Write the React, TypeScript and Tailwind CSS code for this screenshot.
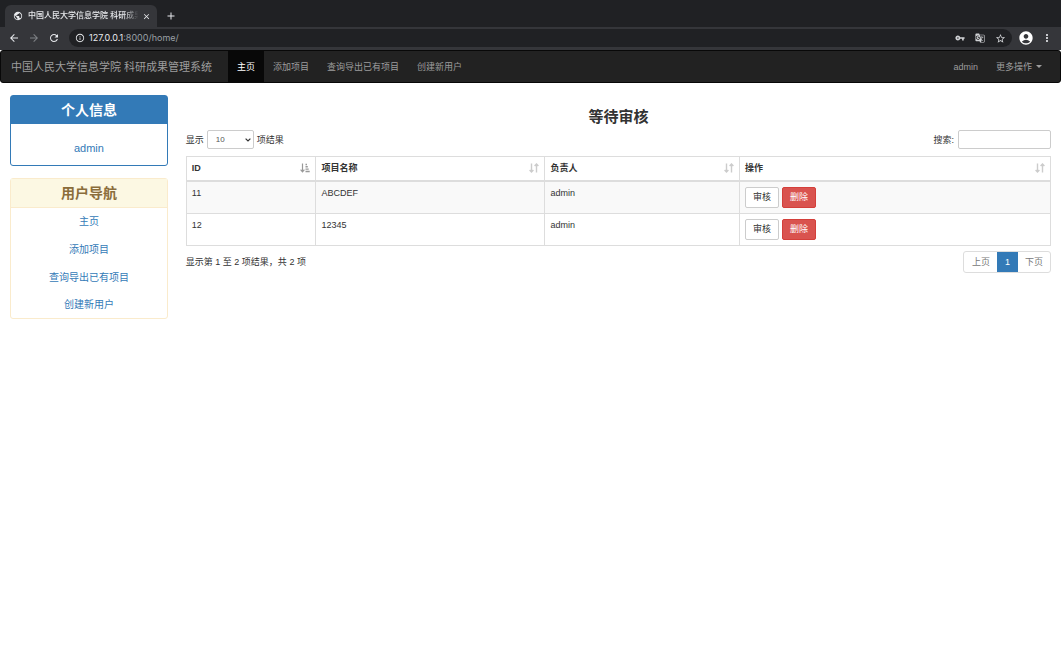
import { useState } from "react";
import { MdPublic, MdArrowBack, MdArrowForward, MdRefresh, MdInfoOutline, MdVpnKey, MdGTranslate, MdStarBorder, MdAccountCircle, MdMoreVert, MdClose, MdAdd } from "react-icons/md";

interface Project { id: number; name: string; owner: string }
type SortKey = "id" | "name" | "owner" | "action";

const NAV = ["主页", "添加项目", "查询导出已有项目", "创建新用户"];

const PROJECTS: Project[] = [
  { id: 11, name: "ABCDEF", owner: "admin" },
  { id: 12, name: "12345", owner: "admin" },
];

const COLUMNS: { key: SortKey; label: string; width: string }[] = [
  { key: "id", label: "ID", width: "w-[15%]" },
  { key: "name", label: "项目名称", width: "w-[26.5%]" },
  { key: "owner", label: "负责人", width: "w-[22.5%]" },
  { key: "action", label: "操作", width: "w-[36%]" },
];

function SortIcon({ active }: { active: boolean }) {
  if (active) {
    return (
      <svg viewBox="0 0 10 10" className="size-[10px] text-[#999]" fill="none" stroke="currentColor">
        <path d="M2.5 0.5v8M0.6 6.600l1.900 2.200 1.900-2.200" strokeWidth="1.2" />
        <path d="M5.5 1.500h1.500M5.5 3.800h2.300M5.5 6.100h3.200M5.5 8.500h4.200" strokeWidth="1.4" />
      </svg>
    );
  }
  return (
    <svg viewBox="0 0 10 10" className="size-[10px] text-[#ccc]" fill="none" stroke="currentColor" strokeWidth="1.4">
      <path d="M2.5 0.5v8.500M0.600 7l1.900 2 1.900-2" />
      <path d="M7.500 9.500v-8.500M5.600 3l1.900-2 1.900 2" />
    </svg>
  );
}

function BrowserBar() {
  return (
    <div className="bg-[#202124] text-[#e8eaed]">
      <div className="flex h-[27px] items-end pl-[5px]">
        <div className="flex h-[22px] w-[152px] items-center rounded-t-md bg-[#35363a] pr-1.5 pl-2">
          <MdPublic className="size-[10px] shrink-0" />
          <span className="ml-[5px] flex-1 text-[8px] font-medium whitespace-nowrap [mask-image:linear-gradient(to_right,black_84%,transparent_97%)]">
            中国人民大学信息学院 科研成果
          </span>
          <button aria-label="关闭标签页"><MdClose className="size-[9px]" /></button>
        </div>
        <button aria-label="新标签页" className="mb-[5px] ml-2"><MdAdd className="size-3" /></button>
      </div>
      <div className="flex h-[23px] items-center bg-[#35363a] px-2 pb-px">
        <button aria-label="后退"><MdArrowBack className="size-3" /></button>
        <button aria-label="前进" className="ml-2 text-[#7f8185]"><MdArrowForward className="size-3" /></button>
        <button aria-label="刷新" className="ml-2"><MdRefresh className="size-3" /></button>
        <div className="ml-[9px] flex h-[18px] flex-1 items-center rounded-full bg-[#202124] px-1.5">
          <MdInfoOutline className="size-[10px]" />
          <span className="ml-1 font-['Inter',sans-serif] text-[9px] text-[#9aa0a6]">
            <span className="text-[#e8eaed]">127.0.0.1</span>:8000/home/
          </span>
          <div className="ml-auto flex items-center gap-[10px] text-[#d0d2d5]">
            <MdVpnKey className="size-[10px]" />
            <MdGTranslate className="size-[10px]" />
            <MdStarBorder className="size-[11px]" />
          </div>
        </div>
        <MdAccountCircle className="ml-1.5 size-4 text-white" />
        <button aria-label="更多" className="ml-[7px]"><MdMoreVert className="size-3" /></button>
      </div>
    </div>
  );
}

function Navbar() {
  return (
    <nav className="flex h-[33px] items-stretch rounded-[3px] border border-[#080808] bg-[#222] text-[#9d9d9d]">
      <a href="#" className="flex w-[227px] items-center pl-[10px] text-[11px] whitespace-nowrap">中国人民大学信息学院 科研成果管理系统</a>
      {NAV.map((item, i) => (
        <a key={item} href="#" className={`flex items-center px-[9px] ${i === 0 ? "bg-[#080808] text-white" : ""}`}>{item}</a>
      ))}
      <a href="#" className="ml-auto flex items-center px-[9px]">admin</a>
      <button className="mr-[9px] flex items-center px-[9px]">
        更多操作
        <span className="ml-1 border-x-[3px] border-t-[3px] border-x-transparent border-t-current" />
      </button>
    </nav>
  );
}

function Sidebar() {
  return (
    <aside className="w-1/6 shrink-0 pr-[9px] pl-[10px] text-center text-[#337ab7]">
      <section className="rounded-[3px] border border-[#337ab7]">
        <h3 className="bg-[#337ab7] text-[14px] leading-7 font-bold text-white">个人信息</h3>
        <a href="#" className="block pt-[14px] pb-[7px] text-[11px] leading-5">admin</a>
      </section>
      <section className="mt-3 rounded-[3px] border border-[#faebcc]">
        <h3 className="border-b border-[#faebcc] bg-[#fcf8e3] text-[14px] leading-7 font-bold text-[#8a6d3b]">用户导航</h3>
        {NAV.map((item) => (
          <a key={item} href="#" className="block text-[10px] leading-[28px] last:leading-[26px]">{item}</a>
        ))}
      </section>
    </aside>
  );
}

export default function App() {
  const [sort, setSort] = useState<SortKey>("id");
  const [query, setQuery] = useState("");
  const rows = PROJECTS.filter((p) => `${p.id} ${p.name} ${p.owner}`.includes(query));

  return (
    <div className="bg-white font-['Liberation_Sans','Noto_Sans_CJK_SC',sans-serif] text-[9px] leading-3 text-[#333]">
      <BrowserBar />
      <Navbar />
      <div className="flex pt-3">
        <Sidebar />
        <main className="min-w-0 flex-1 pr-[10px] pl-[9px]">
          <h3 className="mt-3 mb-[3px] text-center text-[15px] leading-5 font-bold">等待审核</h3>
          <div className="flex items-center justify-between">
            <label className="flex items-center gap-[3px]">
              显示
              <span className="relative">
                <select className="block h-[19px] w-[47px] appearance-none rounded-xs border border-[#ccc] bg-white pl-2 text-[8px] text-[#555]">
                  <option>10</option>
                  <option>25</option>
                  <option>50</option>
                  <option>100</option>
                </select>
                <svg viewBox="0 0 6 4" className="pointer-events-none absolute top-2 right-[3px] h-1 w-1.5" fill="none" stroke="#333" strokeWidth="1.200">
                  <path d="M0.600 0.600l2.400 2.400 2.400-2.400" />
                </svg>
              </span>
              项结果
            </label>
            <label className="flex items-center gap-1">
              搜索:
              <input type="search" value={query} onChange={(e) => setQuery(e.target.value)}
                className="h-[19px] w-[93px] rounded-xs border border-[#ccc] px-1.5" />
            </label>
          </div>
          <table className="mt-[7px] w-full table-fixed border-collapse border border-[#ddd]">
            <thead>
              <tr>
                {COLUMNS.map((c) => (
                  <th key={c.key} className={`h-6 border border-b-2 border-[#ddd] px-[5px] text-left ${c.width}`}>
                    <button onClick={() => setSort(c.key)} className="flex w-full items-center justify-between">
                      {c.label}
                      <SortIcon active={sort === c.key} />
                    </button>
                  </th>
                ))}
              </tr>
            </thead>
            <tbody>
              {rows.map((p) => (
                <tr key={p.id} className="align-top odd:bg-[#f9f9f9]">
                  <td className="border border-[#ddd] px-[5px] py-[5px]">{p.id}</td>
                  <td className="border border-[#ddd] px-[5px] py-[5px]">{p.name}</td>
                  <td className="border border-[#ddd] px-[5px] py-[5px]">{p.owner}</td>
                  <td className="border border-[#ddd] px-[5px] py-[5px]">
                    <div className="flex gap-[3px]">
                      <button className="h-[21px] rounded-xs border border-[#ccc] bg-white px-[7px]">审核</button>
                      <button className="h-[21px] rounded-xs border border-[#d43f3a] bg-[#d9534f] px-[7px] text-white">删除</button>
                    </div>
                  </td>
                </tr>
              ))}
            </tbody>
          </table>
          <div className="mt-[5px] flex justify-between">
            <p className="pt-[5px]">显示第 1 至 {rows.length} 项结果，共 {rows.length} 项</p>
            <div className="flex h-[22px] overflow-hidden rounded-[3px] border border-[#ddd] text-[#777]">
              <button className="pr-[7px] pl-2">上页</button>
              <button className="bg-[#337ab7] px-2 text-white">1</button>
              <button className="px-[7px]">下页</button>
            </div>
          </div>
        </main>
      </div>
    </div>
  );
}
